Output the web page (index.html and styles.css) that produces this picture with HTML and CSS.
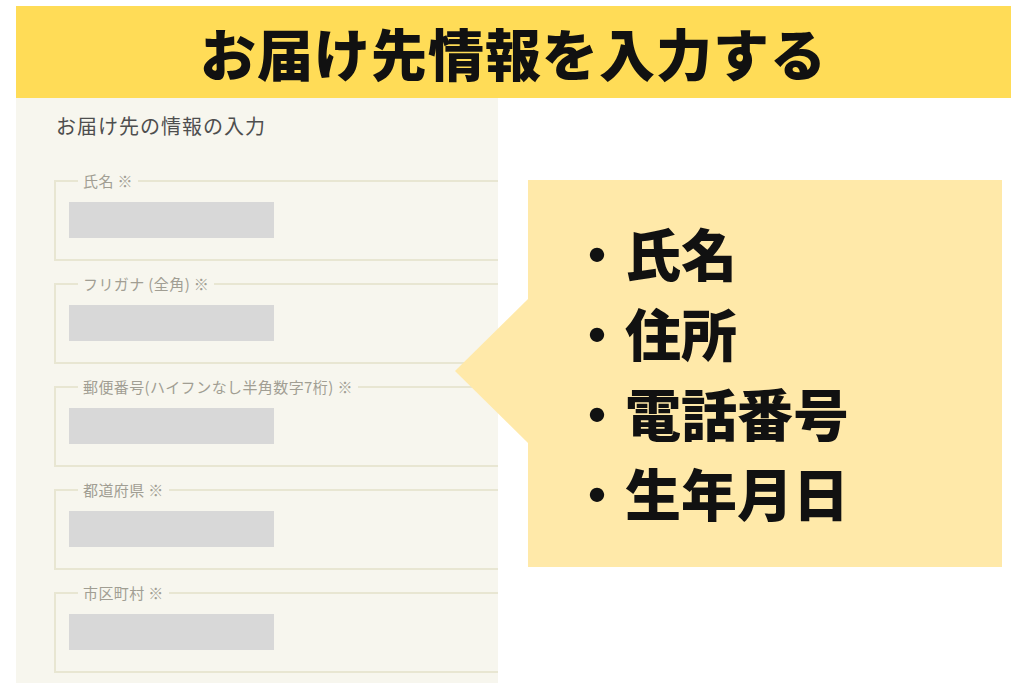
FILE: index.html
```html
<!DOCTYPE html>
<html lang="ja">
<head>
<meta charset="utf-8">
<title>お届け先情報を入力する</title>
<link rel="stylesheet" href="styles.css">
</head>
<body>
  <header class="banner">
    <h1 class="banner-title">お届け先情報を入力する</h1>
  </header>
  <main class="row">
    <section class="panel">
      <h2 class="panel-title">お届け先の情報の入力</h2>
      <fieldset class="field">
        <legend class="field-label">氏名 ※</legend>
        <div class="field-input"></div>
      </fieldset>
      <fieldset class="field">
        <legend class="field-label">フリガナ (全角) ※</legend>
        <div class="field-input"></div>
      </fieldset>
      <fieldset class="field">
        <legend class="field-label">郵便番号(ハイフンなし半角数字7桁) ※</legend>
        <div class="field-input"></div>
      </fieldset>
      <fieldset class="field">
        <legend class="field-label">都道府県 ※</legend>
        <div class="field-input"></div>
      </fieldset>
      <fieldset class="field">
        <legend class="field-label">市区町村 ※</legend>
        <div class="field-input"></div>
      </fieldset>
    </section>
    <aside class="callout">
      <ul class="callout-list">
        <li><span class="dot">・</span>氏名</li>
        <li><span class="dot">・</span>住所</li>
        <li><span class="dot">・</span>電話番号</li>
        <li><span class="dot">・</span>生年月日</li>
      </ul>
    </aside>
  </main>
</body>
</html>
```

FILE: styles.css
```css
html, body {
  margin: 0;
  padding: 0;
  background: #ffffff;
}

body {
  width: 1024px;
  height: 683px;
  overflow: hidden;
  font-family: "Noto Sans CJK JP", "Noto Sans", sans-serif;
}

.banner {
  margin: 6px 13px 0 16px;
  height: 92px;
  background: #ffdc57;
  display: flex;
  align-items: center;
  justify-content: center;
}

.banner-title {
  margin: 0;
  font-size: 56px;
  line-height: 1;
  font-weight: 900;
  letter-spacing: 1px;
  color: #111111;
}

.row {
  display: flex;
  align-items: flex-start;
  gap: 30px;
  padding-left: 16px;
}

.panel {
  width: 444px;
  height: 571px;
  padding: 14px 0 0 38px;
  background: #f7f6ee;
  overflow: hidden;
}

.panel-title {
  margin: 0 0 31px 2px;
  font-size: 20px;
  line-height: 28px;
  font-weight: 400;
  letter-spacing: 1px;
  color: #4e4e4e;
}

.field {
  width: 500px;
  margin: 0 0 13px 0;
  padding: 11px 13px 21px 13px;
  border: 2px solid #e8e6d2;
  box-sizing: border-box;
  min-inline-size: 0;
}

.field-label {
  margin-left: 9px;
  padding: 0 5px;
  font-size: 15px;
  line-height: 20px;
  letter-spacing: 0.4px;
  color: #a19e93;
}

.field-input {
  width: 205px;
  height: 36px;
  background: #d8d8d8;
}

.callout {
  position: relative;
  width: 474px;
  height: 387px;
  margin-top: 82px;
  background: #ffe9a9;
  box-sizing: border-box;
  padding: 32px 0 0 41px;
}

.callout::before {
  content: "";
  position: absolute;
  left: -73px;
  top: 119px;
  width: 0;
  height: 0;
  border-top: 72px solid transparent;
  border-bottom: 72px solid transparent;
  border-right: 73px solid #ffe9a9;
}

.callout-list {
  list-style: none;
  margin: 0;
  padding: 0;
  font-size: 56px;
  line-height: 80px;
  font-weight: 900;
  color: #111111;
}

.dot {
  font-weight: 700;
}
```
